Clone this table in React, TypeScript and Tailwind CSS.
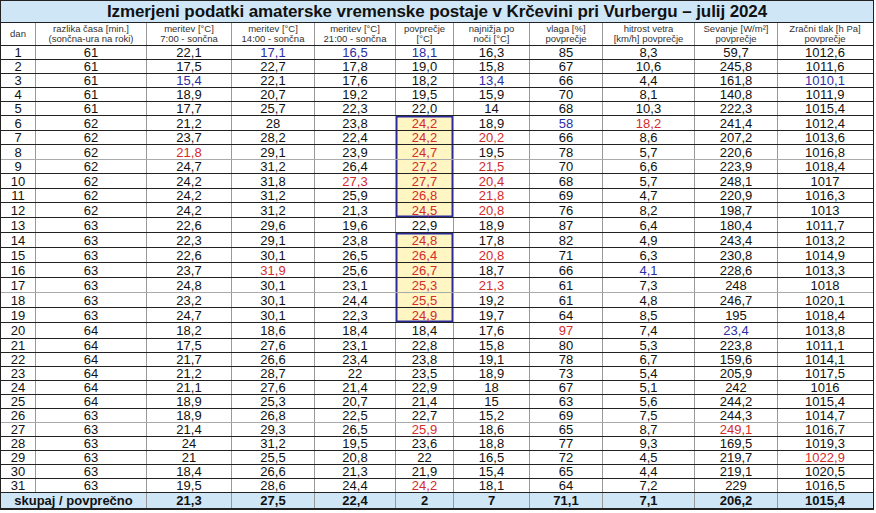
import React from 'react';

const widths = [35, 111, 85, 83, 81, 58, 76, 73, 92, 83, 94];

const headers: string[][] = [
  ['dan'],
  ['razlika časa [min.]', '(sončna-ura na roki)'],
  ['meritev [°C]', '7:00 - sončna'],
  ['meritev [°C]', '14:00 - sončna'],
  ['meritev [°C]', '21:00 - sončna'],
  ['povprečje', '[°C]'],
  ['najnižja po', 'noči [°C]'],
  ['vlaga [%]', 'povprečje'],
  ['hitrost vetra', '[km/h] povprečje'],
  ['Sevanje [W/m²]', 'povprečje'],
  ['Zračni tlak [h Pa]', 'povprečje'],
];

const rows: string[][] = [
  ['61', '22,1', '17,1', '16,5', '18,1', '16,3', '85', '8,3', '59,7', '1012,6'],
  ['61', '17,5', '22,7', '17,8', '19,0', '15,8', '67', '10,6', '245,8', '1011,6'],
  ['61', '15,4', '22,1', '17,6', '18,2', '13,4', '66', '4,4', '161,8', '1010,1'],
  ['61', '18,9', '20,7', '19,2', '19,5', '15,9', '70', '8,1', '140,8', '1011,9'],
  ['61', '17,7', '25,7', '22,3', '22,0', '14', '68', '10,3', '222,3', '1015,4'],
  ['62', '21,2', '28', '23,8', '24,2', '18,9', '58', '18,2', '241,4', '1012,4'],
  ['62', '23,7', '28,2', '22,4', '24,2', '20,2', '66', '8,6', '207,2', '1013,6'],
  ['62', '21,8', '29,1', '23,9', '24,7', '19,5', '78', '5,7', '220,6', '1016,8'],
  ['62', '24,7', '31,2', '26,4', '27,2', '21,5', '70', '6,6', '223,9', '1018,4'],
  ['62', '24,2', '31,8', '27,3', '27,7', '20,4', '68', '5,7', '248,1', '1017'],
  ['62', '24,2', '31,2', '25,9', '26,8', '21,8', '69', '4,7', '220,9', '1016,3'],
  ['62', '24,2', '31,2', '21,3', '24,5', '20,8', '76', '8,2', '198,7', '1013'],
  ['63', '22,6', '29,6', '19,6', '22,9', '18,9', '87', '6,4', '180,4', '1011,7'],
  ['63', '22,3', '29,1', '23,8', '24,8', '17,8', '82', '4,9', '243,4', '1013,2'],
  ['63', '22,6', '30,1', '26,5', '26,4', '20,8', '71', '6,3', '230,8', '1014,9'],
  ['63', '23,7', '31,9', '25,6', '26,7', '18,7', '66', '4,1', '228,6', '1013,3'],
  ['63', '24,8', '30,1', '23,1', '25,3', '21,3', '61', '7,3', '248', '1018'],
  ['63', '23,2', '30,1', '24,4', '25,5', '19,2', '61', '4,8', '246,7', '1020,1'],
  ['63', '24,7', '30,1', '22,3', '24,9', '19,7', '64', '8,5', '195', '1018,4'],
  ['64', '18,2', '18,6', '18,4', '18,4', '17,6', '97', '7,4', '23,4', '1013,8'],
  ['64', '17,5', '27,6', '23,1', '22,8', '15,8', '80', '5,3', '223,8', '1011,1'],
  ['64', '21,7', '26,6', '23,4', '23,8', '19,1', '78', '6,7', '159,6', '1014,1'],
  ['64', '21,2', '28,7', '22', '23,5', '18,9', '73', '5,4', '205,9', '1017,5'],
  ['64', '21,1', '27,6', '21,4', '22,9', '18', '67', '5,1', '242', '1016'],
  ['64', '18,9', '25,3', '20,7', '21,4', '15', '63', '5,6', '244,2', '1015,4'],
  ['63', '18,9', '26,8', '22,5', '22,7', '15,2', '69', '7,5', '244,3', '1014,7'],
  ['63', '21,4', '29,3', '26,5', '25,9', '18,6', '65', '8,7', '249,1', '1016,7'],
  ['63', '24', '31,2', '19,5', '23,6', '18,8', '77', '9,3', '169,5', '1019,3'],
  ['63', '21', '25,5', '20,8', '22', '16,5', '72', '4,5', '219,7', '1022,9'],
  ['63', '18,4', '26,6', '21,3', '21,9', '15,4', '65', '4,4', '219,1', '1020,5'],
  ['63', '19,5', '28,6', '24,4', '24,2', '18,1', '64', '7,2', '229', '1016,5'],
];

const totals = ['21,3', '27,5', '22,4', '2', '7', '71,1', '7,1', '206,2', '1015,4'];

// day-column -> r (red) / b (blue)
const colors: Record<string, 'r' | 'b'> = {
  '1-3': 'b', '1-4': 'b', '1-5': 'b',
  '3-2': 'b', '3-6': 'b', '3-10': 'b',
  '6-7': 'b', '6-8': 'r',
  '7-6': 'r', '8-2': 'r', '9-6': 'r',
  '10-4': 'r', '10-6': 'r', '11-6': 'r', '12-6': 'r',
  '15-6': 'r', '16-3': 'r', '16-8': 'b', '17-6': 'r',
  '20-7': 'r', '20-9': 'b',
  '27-5': 'r', '27-9': 'r', '29-10': 'r', '31-5': 'r',
};

const heights = [14, 14, 14, 14, 14, 15, 14, 15, 14, 15, 14, 15, 15, 15, 15, 15, 15, 15, 15, 16, 14, 14, 14, 14, 14, 14, 14, 14, 14, 14, 14];
const grayLines = [8, 17, 26];

const boxStart = [6, 14];
const boxEnd = [12, 19];

function isBoxed(day: number) {
  return (day >= 6 && day <= 12) || (day >= 14 && day <= 19);
}

export default function App() {
  return (
    <div className="w-[876px] h-[513px] bg-white font-['Liberation_Sans',Arial,sans-serif] text-[#111]">
      <div className="w-[874px] border border-[#222] border-b-2">
        <div className="h-[22px] bg-[#cfe6f7] border-b border-[#222] flex items-center justify-center">
          <h1 className="text-[17px] font-bold leading-none tracking-[-0.1px]">
            Izmerjeni podatki amaterske vremenske postaje v Krčevini pri Vurbergu – julij 2024
          </h1>
        </div>

        <div className="flex h-[23px] border-b border-[#222]">
          {headers.map((h, i) => (
            <div
              key={i}
              style={{ width: widths[i] }}
              className={`flex flex-col items-center justify-center text-[9.5px] leading-[10px] text-[#333] ${i < 10 ? 'border-r border-[#999]' : ''}`}
            >
              {h.map((line, j) => (
                <span key={j}>{line}</span>
              ))}
            </div>
          ))}
        </div>

        {rows.map((r, idx) => {
          const day = idx + 1;
          const cells = [String(day), ...r];
          return (
            <div
              key={day}
              style={{ height: heights[idx] }}
              className={`flex border-b ${grayLines.includes(day) ? 'border-[#aaa]' : 'border-[#222]'}`}
            >
              {cells.map((c, i) => {
                const boxed = i === 5 && isBoxed(day);
                const col = boxed ? 'r' : colors[`${day}-${i}`];
                const shadows = boxed
                  ? boxStart.includes(day)
                    ? 'shadow-[inset_1.5px_0_0_#2b2b9c,inset_-1.5px_0_0_#2b2b9c,inset_0_1.5px_0_#2b2b9c]'
                    : boxEnd.includes(day)
                      ? 'shadow-[inset_1.5px_0_0_#2b2b9c,inset_-1.5px_0_0_#2b2b9c,inset_0_-1.5px_0_#2b2b9c]'
                      : 'shadow-[inset_1.5px_0_0_#2b2b9c,inset_-1.5px_0_0_#2b2b9c]'
                  : '';
                return (
                  <div
                    key={i}
                    style={{ width: widths[i] }}
                    className={`flex items-center justify-center text-[13px] leading-[13px] ${i < 10 ? 'border-r border-[#999]' : ''} ${boxed ? 'bg-[#fff6c4]' : ''} ${shadows} ${col === 'r' ? 'text-[#d42b2b]' : col === 'b' ? 'text-[#2d2da6]' : ''}`}
                  >
                    {c}
                  </div>
                );
              })}
            </div>
          );
        })}

        <div className="flex h-[15px] bg-[#cfe6f7] font-bold text-[13px] leading-[13px]">
          <div style={{ width: widths[0] + widths[1] }} className="flex items-center justify-center border-r border-[#999]">
            skupaj / povprečno
          </div>
          {totals.map((t, i) => (
            <div
              key={i}
              style={{ width: widths[i + 2] }}
              className={`flex items-center justify-center ${i < 8 ? 'border-r border-[#999]' : ''}`}
            >
              {t}
            </div>
          ))}
        </div>
      </div>
    </div>
  );
}
